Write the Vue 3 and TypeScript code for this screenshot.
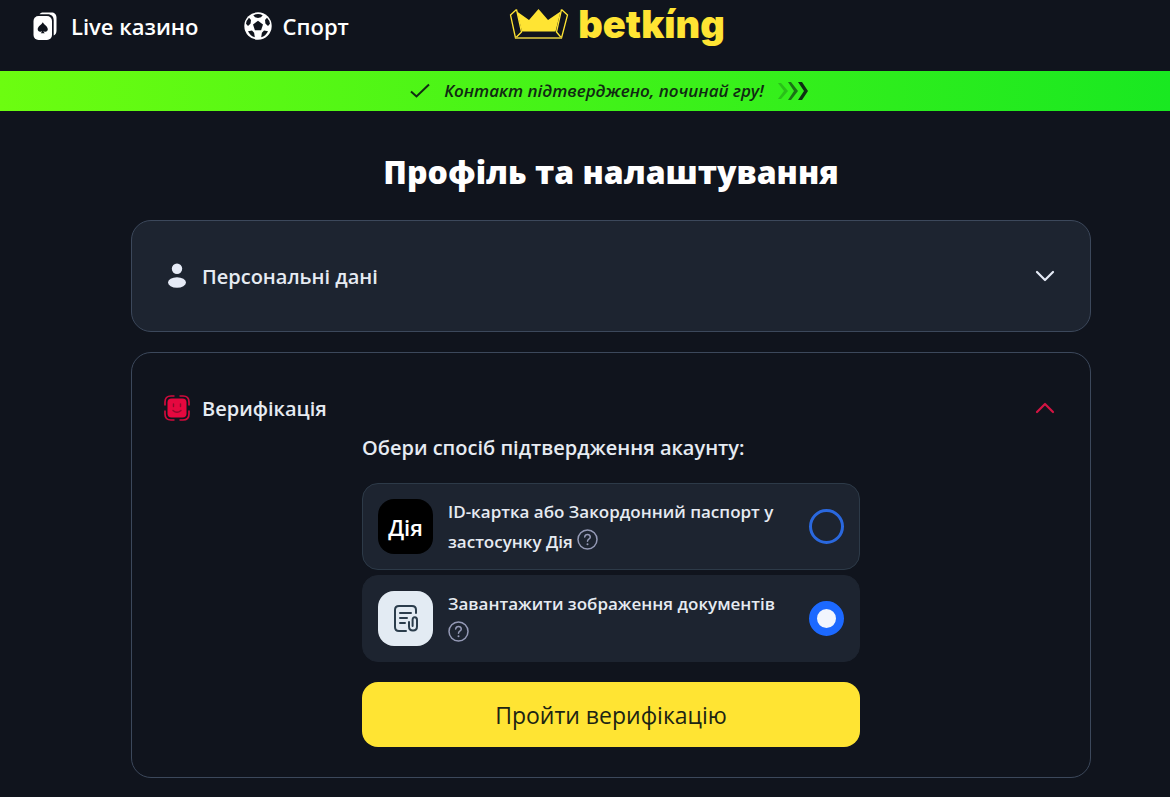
<script setup lang="ts">
import { ref } from 'vue'

interface Method {
  id: string
  title: string
}

const methods: Method[] = [
  { id: 'diia', title: 'ID-картка або Закордонний паспорт у застосунку Дія' },
  { id: 'upload', title: 'Завантажити зображення документів' },
]

const selected = ref('upload')
const personalOpen = ref(false)
const verificationOpen = ref(true)
</script>

<template>
  <div class="page">
    <header class="topbar">
      <nav class="nav">
        <a class="nav-link" href="#live">
          <svg class="nav-icon" viewBox="0 0 28 28" aria-hidden="true">
            <path d="M7.500 2.200C8.300 1 9.500 .5 11.100 .5H19.500c3 0 5 2 5 5v13c0 2.600-1 4.200-2.800 5V8.200c0-3.700-2.300-6-6-6z" fill="#fff" />
            <rect x="1.500" y="4" width="18.500" height="24" rx="5" fill="#fff" />
            <path d="M10.800 10.200c1 2.300 5 4 5 7.100 0 2.400-2.700 3.200-4.200 1.600.1 1.100.5 1.700 1.200 2.300H8.700c.7-.6 1.100-1.200 1.200-2.300-1.500 1.600-4.200.8-4.200-1.600 0-3.100 4.100-4.800 5.100-7.100z" fill="#10141d" />
          </svg>
          Live казино
        </a>
        <a class="nav-link" href="#sport">
          <svg class="nav-icon" viewBox="0 0 28 28" aria-hidden="true">
            <circle cx="14" cy="14" r="13.700" fill="#fff" />
            <g fill="#10141d">
              <path d="M14 8.800l5 3.600-1.900 5.900h-6.200L9 12.400z" />
              <path d="M9.300 3.200Q14 .8 18.700 3.200L17 5.300 14 6 11 5.300z" />
              <path d="M2 11.800Q2.500 8.300 5 5.800l2 2.100-.4 3.600L4 14z" />
              <path d="M26 11.800Q25.500 8.300 23 5.800l-2 2.100.4 3.600L24 14z" />
              <path d="M4 19.200l4-.8 2.100 2.400.7 4.500Q6.400 24 4 19.200z" />
              <path d="M24 19.200l-4-.8-2.100 2.400-.7 4.500Q21.600 24 24 19.200z" />
            </g>
          </svg>
          Спорт
        </a>
      </nav>
      <a class="logo" href="#home" aria-label="betking">
        <svg class="crown" viewBox="0 0 60 32" aria-hidden="true">
          <path d="M8 3.500L20 12 29.500 1 39 12 51.500 3.500 46.500 23.500H13z" fill="#ffe433" />
          <path d="M7.500 1.500L1.500 7 6.500 30H52.500L58.500 7 52.500 1.500M7.500 1.500L12.500 24 6.500 30M52.500 1.500L47.500 24 52.500 30" fill="none" stroke="#ffe433" stroke-width="1.300" />
          <path d="M6.500 30H52.500" stroke="#a89b3c" stroke-width="1.500" />
        </svg>
        <span class="wordmark">betkíng</span>
      </a>
    </header>

    <div class="banner" role="status">
      <svg class="banner-check" viewBox="0 0 20 16" aria-hidden="true">
        <path d="M1 8.500l5.500 5L19 1.500" fill="none" stroke="#102a12" stroke-width="2" />
      </svg>
      <em class="banner-text">Контакт підтверджено, починай гру!</em>
      <svg class="banner-arrows" viewBox="0 0 30 20" aria-hidden="true">
        <g fill="#0d3012">
          <path opacity=".25" d="M0 2h3l7 8-7 8H0l6-8z" />
          <path opacity=".65" d="M10 1h3l7 9-7 9h-3l6-9z" />
          <path d="M20 1h4l6 9-6 9h-4l6-9z" />
        </g>
      </svg>
    </div>

    <main class="content">
      <h1 class="title">Профіль та налаштування</h1>

      <section class="card card-filled">
        <button class="card-head" type="button" :aria-expanded="personalOpen" @click="personalOpen = !personalOpen">
          <svg class="head-icon" viewBox="0 0 26 26" aria-hidden="true">
            <circle cx="13" cy="5.800" r="5.200" fill="#e6ebf6" />
            <ellipse cx="13" cy="19.500" rx="9" ry="5.200" fill="#e6ebf6" />
          </svg>
          <span class="head-text">Персональні дані</span>
          <svg class="head-icon" viewBox="0 0 26 26" aria-hidden="true">
            <path d="M5 9l8 8 8-8" fill="none" stroke="#e6ebf6" stroke-width="2.200" stroke-linecap="round" stroke-linejoin="round" />
          </svg>
        </button>
      </section>

      <section class="card">
        <button class="card-head" type="button" :aria-expanded="verificationOpen" @click="verificationOpen = !verificationOpen">
          <svg class="head-icon" viewBox="0 0 26 26" aria-hidden="true">
            <rect x="3.500" y="3.500" width="19" height="19" rx="4" fill="#e5083f" />
            <path d="M1 10.500V7q0-6 6-6h3.500M15.500 1H19q6 0 6 6v3.500M25 15.500V19q0 6-6 6h-3.500M10.500 25H7q-6 0-6-6v-3.500" fill="none" stroke="#d00a3c" stroke-width="1.700" />
            <path d="M9.500 9v2.500M16.500 9v2.500M9 15.500q4 3.500 8 0" fill="none" stroke="#8c0a2c" stroke-width="1.400" stroke-linecap="round" />
          </svg>
          <span class="head-text">Верифікація</span>
          <svg class="head-icon" viewBox="0 0 26 26" aria-hidden="true">
            <path d="M5 17l8-8 8 8" fill="none" stroke="#d31443" stroke-width="2.200" stroke-linecap="round" stroke-linejoin="round" />
          </svg>
        </button>

        <form v-if="verificationOpen" class="verify" @submit.prevent>
          <h2 id="method-title" class="verify-title">Обери спосіб підтвердження акаунту:</h2>
          <div class="methods" role="radiogroup" aria-labelledby="method-title">
            <div v-for="m in methods" :key="m.id" class="method" :class="{ active: selected === m.id }">
              <span v-if="m.id === 'diia'" class="tile tile-dark" aria-hidden="true">Дія</span>
              <span v-else class="tile tile-light" aria-hidden="true">
                <svg class="doc" viewBox="0 0 28 30">
                  <g fill="none" stroke="#2b3d4c" stroke-width="2" stroke-linecap="round" stroke-linejoin="round">
                    <path d="M24 9V6q0-4-4-4H7Q3 2 3 6v17q0 4 4 4h7" />
                    <path d="M8 9h11M8 14h7M8 19h5" />
                    <path d="M17 18v4.500q0 4 4 4t4-4V16q0-2.700-2.200-2.700T20.600 16v6" />
                  </g>
                </svg>
              </span>
              <div class="method-text">
                <label :for="m.id">{{ m.title }}</label>{{ ' ' }}
                <button class="help" type="button" aria-label="Довідка">
                  <svg class="help-icon" viewBox="0 0 21 21" aria-hidden="true">
                    <g fill="none" stroke="#9499b5" stroke-width="1.500" stroke-linecap="round">
                      <circle cx="10.500" cy="10.500" r="9.500" />
                      <path d="M7.700 8q.3-2.600 2.800-2.600T13.300 8q0 1.300-1.500 2.200-1.300.8-1.300 2.100" />
                    </g>
                    <circle cx="10.500" cy="15.200" r="1" fill="#9499b5" />
                  </svg>
                </button>
              </div>
              <input :id="m.id" v-model="selected" class="radio" type="radio" name="method" :value="m.id" />
            </div>
          </div>
          <button class="submit" type="submit">Пройти верифікацію</button>
        </form>
      </section>
    </main>
  </div>
</template>

<style>
body {
  background: #10141d;
}
</style>

<style scoped>
.page,
.page * {
  box-sizing: border-box;
}

.page {
  min-height: 100vh;
  background: #10141d;
  color: #e6ebf2;
  font-family: "Open Sans", "Noto Sans", sans-serif;
}

button {
  border: 0;
  background: none;
  padding: 0;
  color: inherit;
  font-family: inherit;
  cursor: pointer;
}

svg {
  display: block;
  flex: none;
}

.topbar {
  display: grid;
  grid-template-columns: 1fr auto 1fr;
  height: 71px;
  padding-left: 64px;
}

.nav {
  display: flex;
  gap: 45px;
  height: 51px;
  margin-left: -32px;
}

.nav-link {
  display: flex;
  align-items: center;
  gap: 11px;
  color: #fff;
  font-size: 22px;
  font-weight: 600;
  text-decoration: none;
  white-space: nowrap;
}

.nav-icon {
  width: 28px;
  height: 28px;
}

.logo {
  display: flex;
  align-items: center;
  gap: 9px;
  height: 48px;
  color: #ffe433;
  text-decoration: none;
}

.crown {
  width: 60px;
  height: 32px;
}

.wordmark {
  font-family: Inter, sans-serif;
  font-size: 38px;
  font-weight: 900;
  line-height: 48px;
}

.banner {
  display: flex;
  align-items: center;
  justify-content: center;
  gap: 14px;
  height: 40px;
  padding-left: 48px;
  background: linear-gradient(90deg, #6cfd10, #19e821);
  color: #102a12;
}

.banner-check {
  width: 20px;
  height: 16px;
}

.banner-text {
  font-size: 17px;
  font-weight: 600;
  line-height: 24px;
}

.banner-arrows {
  width: 30px;
  height: 20px;
}

.content {
  display: flex;
  flex-direction: column;
  gap: 20px;
  max-width: 1012px;
  margin: 0 79px;
  padding: 41px 0 19px 52px;
}

.title {
  margin: 0 0 8px;
  color: #fff;
  font-size: 32px;
  font-weight: 800;
  line-height: 40px;
  text-align: center;
}

.card {
  padding: 31px 32px 30px;
  border: 1px solid #3c485b;
  border-radius: 20px;
}

.card-filled {
  padding-bottom: 31px;
  background: #1d2430;
}

.card-head {
  display: flex;
  align-items: center;
  gap: 12px;
  width: 100%;
  height: 48px;
  text-align: left;
}

.head-icon {
  width: 26px;
  height: 26px;
}

.head-text {
  flex: 1;
  font-size: 20px;
  font-weight: 600;
}

.verify {
  display: flex;
  flex-direction: column;
  gap: 20px;
  max-width: 498px;
  margin: 0 auto;
}

.verify-title {
  margin: 0;
  font-size: 20px;
  font-weight: 600;
  line-height: 31px;
}

.methods {
  display: flex;
  flex-direction: column;
  gap: 5px;
}

.method {
  display: flex;
  align-items: center;
  gap: 15px;
  min-height: 87px;
  padding: 8px 15px;
  border: 1px solid #2d3a48;
  border-radius: 16px;
  background: #1d2430;
}

.method.active {
  border-color: #1d2430;
}

.tile {
  display: flex;
  align-items: center;
  justify-content: center;
  flex: none;
  width: 55px;
  height: 55px;
  border-radius: 16px;
}

.tile-dark {
  background: #000;
  color: #fff;
  font-size: 22px;
  font-weight: 600;
}

.tile-light {
  background: #e3ebf3;
}

.doc {
  width: 28px;
  height: 30px;
}

.method-text {
  flex: 1;
  font-size: 17px;
  font-weight: 600;
  line-height: 30px;
}

.help {
  display: inline-block;
  vertical-align: -2px;
}

.help-icon {
  width: 21px;
  height: 21px;
}

.radio {
  appearance: none;
  flex: none;
  width: 35px;
  height: 35px;
  margin: 0;
  border: 3px solid #2a68de;
  border-radius: 50%;
}

.radio:checked {
  border: 8px solid #1c69ff;
  background: #f1f5fd;
}

.submit {
  height: 65px;
  border-radius: 16px;
  background: #ffe433;
  color: #1c2413;
  font-size: 23px;
  font-weight: 400;
}
</style>
